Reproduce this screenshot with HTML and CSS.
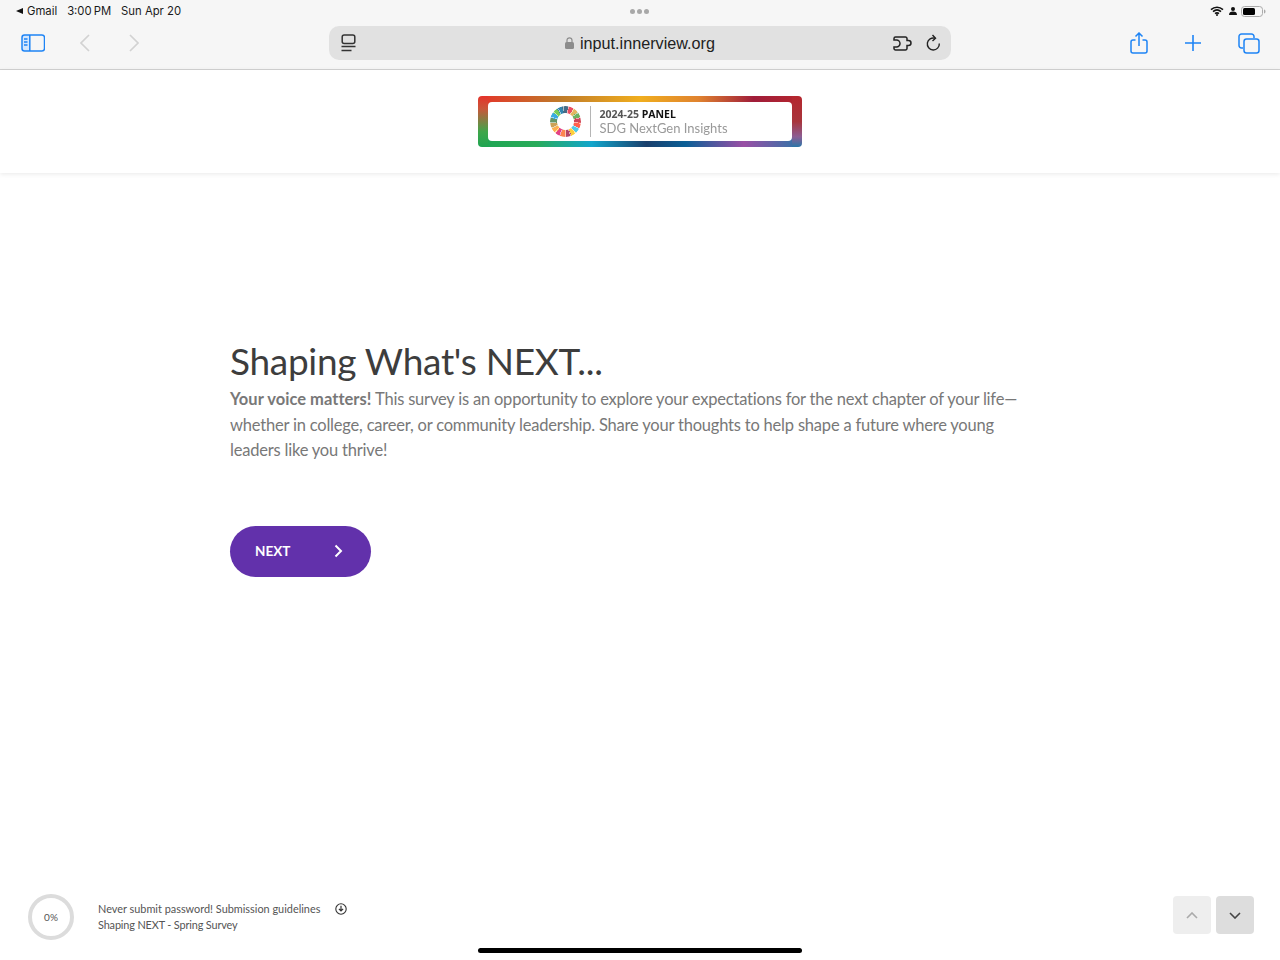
FILE: index.html
```html
<!DOCTYPE html>
<html lang="en">
<head>
<meta charset="utf-8">
<title>Shaping What's NEXT...</title>
<link rel="stylesheet" href="styles.css">
</head>
<body>
<div class="app">
  <header class="browser">
    <div class="status">
      <div class="status-left">
        <span class="back-app"><svg width="7" height="6" viewBox="0 0 7 6"><path d="M0 3 7 0v6z" fill="#111"/></svg>Gmail</span>
        <span>3:00&#8201;PM</span>
        <span>Sun Apr 20</span>
      </div>
      <div class="dots"><i></i><i></i><i></i></div>
      <div class="status-right">
        <svg width="14" height="10" viewBox="0 0 14 10"><path d="M1 3.6C4.5.4 9.500.4 13 3.600M3 5.700c2.500-2.200 5.500-2.200 8 0M5 7.600c1.300-1 2.700-1 4 0" fill="none" stroke="#111" stroke-width="1.600"/><circle cx="7" cy="9" r="1" fill="#111"/></svg>
        <svg width="8" height="8" viewBox="0 0 8 8"><circle cx="4" cy="2" r="2" fill="#111"/><path d="M0 8c0-2.500 1.500-3.500 4-3.500S8 5.500 8 8z" fill="#111"/></svg>
        <svg class="battery" width="25" height="11" viewBox="0 0 25 11"><rect x=".5" y=".5" width="21" height="10" rx="3" fill="none" stroke="#aaa"/><rect x="2" y="2" width="12" height="7" rx="1.500" fill="#000"/><path d="M23 3.500c1 .3 1.500 1 1.500 2s-.5 1.700-1.500 2z" fill="#aaa"/></svg>
      </div>
    </div>
    <div class="toolbar">
      <div class="tools-left">
        <svg class="ic-side" width="24" height="18" viewBox="0 0 24 18"><path d="M3 1h6v16H3a2 2 0 0 1-2-2V3a2 2 0 0 1 2-2z" fill="#d3e6fd"/><rect x="1" y="1" width="22.500" height="16" rx="2.500" fill="none" stroke="#1e84f5" stroke-width="1.500"/><path d="M8.800 1v16" stroke="#1e84f5" stroke-width="1.500"/><path d="M3 5h3.500M3 8h3.500M3 11h3.500" stroke="#1e84f5" stroke-width="1.300"/></svg>
        <svg class="ic-prev" width="10" height="18" viewBox="0 0 10 18"><path d="M9 1 1 9l8 8" fill="none" stroke="#d2d2d2" stroke-width="1.700"/></svg>
        <svg class="ic-next" width="10" height="18" viewBox="0 0 10 18"><path d="m1 1 8 8-8 8" fill="none" stroke="#d2d2d2" stroke-width="1.700"/></svg>
      </div>
      <div class="urlbar">
        <svg class="ic-reader" width="15" height="18" viewBox="0 0 15 18"><rect x="1.200" y="1" width="12.600" height="8.500" rx="2" fill="none" stroke="#333" stroke-width="1.500"/><path d="M.5 12.500h14M.5 16.500h10" stroke="#333" stroke-width="1.500"/></svg>
        <div class="address">
          <svg width="9" height="12" viewBox="0 0 9 12"><path d="M2 5V3.300a2.500 2.500 0 0 1 5 0V5" fill="none" stroke="#8c8c8c" stroke-width="1.200"/><rect y="5" width="9" height="7" rx="1.500" fill="#8c8c8c"/></svg>
          <span>input.innerview.org</span>
        </div>
        <svg class="ic-puzzle" width="20" height="15" viewBox="0 0 20 15"><path d="M1 4V2.500A1.500 1.500 0 0 1 2.500 1h10A1.500 1.500 0 0 1 14 2.500V4.500h1.500a2.500 2.500 0 0 1 0 5H14v3A1.500 1.500 0 0 1 12.500 14h-10A1.500 1.500 0 0 1 1 12.500V11h2.500a3.200 3.200 0 0 0 0-7z" fill="none" stroke="#222" stroke-width="1.500"/></svg>
        <svg class="ic-reload" width="15" height="18" viewBox="0 0 15 18"><path d="M9 4.200A6 6 0 1 0 13.300 9.500" fill="none" stroke="#222" stroke-width="1.400"/><path d="M6.500 1 9.500 4.200 6.500 7" fill="none" stroke="#222" stroke-width="1.400"/></svg>
      </div>
      <div class="tools-right">
        <svg width="18" height="22" viewBox="0 0 18 22"><path d="M5.500 8H3a2 2 0 0 0-2 2v9a2 2 0 0 0 2 2h12a2 2 0 0 0 2-2v-9a2 2 0 0 0-2-2h-2.500M9 14V1M5.500 4.500 9 1l3.500 3.500" fill="none" stroke="#1e84f5" stroke-width="1.500"/></svg>
        <svg width="16" height="16" viewBox="0 0 16 16"><path d="M8 0v16M0 8h16" stroke="#1e84f5" stroke-width="1.600"/></svg>
        <svg width="22" height="21" viewBox="0 0 22 21"><path d="M5 15H3.500A2.500 2.500 0 0 1 1 12.500v-9A2.500 2.500 0 0 1 3.500 1h10A2.500 2.500 0 0 1 16 3.500V5" fill="none" stroke="#1e84f5" stroke-width="1.500"/><rect x="6" y="6" width="15" height="14" rx="2.500" fill="none" stroke="#1e84f5" stroke-width="1.500"/></svg>
      </div>
    </div>
  </header>

  <div class="site-head">
    <div class="logo">
      <div class="logo-inner">
        <div class="wheel"></div>
        <div class="logo-text">
          <div class="logo-year">2024-25 <b>PANEL</b></div>
          <div class="logo-name">SDG NextGen Insights</div>
        </div>
      </div>
    </div>
  </div>

  <main class="content">
    <h1>Shaping What's NEXT...</h1>
    <p><b>Your voice matters!</b> This survey is an opportunity to explore your expectations for the next chapter of your life—<br>whether in college, career, or community leadership. Share your thoughts to help shape a future where young<br>leaders like you thrive!</p>
    <button class="next" type="button"><span>NEXT</span><svg width="9" height="14" viewBox="0 0 9 14"><path d="m1.500 1.500 5.500 5.500-5.500 5.500" fill="none" stroke="#fff" stroke-width="2"/></svg></button>
  </main>

  <footer class="foot">
    <div class="progress">0%</div>
    <div class="foot-text">
      <div class="foot-line"><span>Never submit password! Submission guidelines</span>
        <svg width="12" height="12" viewBox="0 0 12 12"><circle cx="6" cy="6" r="5.200" fill="none" stroke="#333" stroke-width="1.100"/><path d="M6 2.800v5M3.900 5.800 6 8l2.100-2.200" fill="none" stroke="#333" stroke-width="1.200"/></svg>
      </div>
      <div class="foot-title">Shaping NEXT - Spring Survey</div>
    </div>
    <div class="arrows">
      <div class="arrow up"><svg width="12" height="7" viewBox="0 0 12 7"><path d="m1 6 5-5 5 5" fill="none" stroke="#aaa" stroke-width="1.600"/></svg></div>
      <div class="arrow down"><svg width="12" height="7" viewBox="0 0 12 7"><path d="m1 1 5 5 5-5" fill="none" stroke="#444" stroke-width="1.600"/></svg></div>
    </div>
  </footer>
  <div class="home-bar"></div>
</div>
</body>
</html>
```

FILE: styles.css
```css
* { box-sizing: border-box; }
html, body { margin: 0; height: 100%; background: #fff; }
.app { position: relative; display: flex; flex-direction: column; height: 960px; overflow: hidden; font-family: "Lato", "Liberation Sans", sans-serif; }
svg { display: block; flex: none; }

/* browser chrome */
.browser { height: 70px; background: #f6f6f6; border-bottom: 1px solid #d2d2d2; font-family: "Inter", "Liberation Sans", sans-serif; }
.status { display: grid; grid-template-columns: 1fr auto 1fr; align-items: center; height: 22px; padding: 0 14px; font-size: 11.300px; color: #1a1a1a; }
.status-left { display: flex; gap: 10px; align-items: center; margin-left: 2px; }
.back-app { display: flex; gap: 4px; align-items: center; }
.status-right { display: flex; justify-content: flex-end; align-items: center; gap: 5px; }
.battery { margin-left: -1px; }
.dots { display: flex; gap: 2px; margin-left: -1px; }
.dots i { width: 5px; height: 5px; border-radius: 50%; background: #a8a8a8; }
.toolbar { display: grid; grid-template-columns: 1fr 622px 1fr; align-items: center; height: 34px; margin-top: 4px; }
.tools-left { display: flex; align-items: center; padding-left: 21px; }
.ic-prev { margin-left: 35px; }
.ic-next { margin-left: 39px; }
.tools-right { display: flex; align-items: center; padding-left: 179px; gap: 37px; }
.urlbar { display: flex; align-items: center; height: 34px; padding: 0 10px 0 12px; border-radius: 10px; background: #e1e1e1; }
.address { flex: 1; display: flex; justify-content: center; align-items: center; gap: 6px; font-family: "Liberation Sans", sans-serif; font-size: 16.200px; color: #222; margin-left: 30px; margin-right: -1px; }
.ic-puzzle { margin-right: 13px; }

/* survey header */
.site-head { display: flex; justify-content: center; align-items: flex-start; height: 103px; padding-top: 26px; background: #fff; box-shadow: 0 1px 5px rgba(0,0,0,.09); }
.logo {
  width: 324px; height: 51px; padding: 6px 10px; border-radius: 4px; filter: blur(.4px);
  background:
    linear-gradient(#e5332a, #c9573a 25%, #3fa64a 70%, #1fa552) left top / 10px 100% no-repeat,
    linear-gradient(#b5262e, #a8353c 50%, #8c5e94 80%, #2a76a8) right top / 10px 100% no-repeat,
    linear-gradient(90deg, #e5332a, #bf7a2a 25%, #f0ae1e 50%, #e0832f 68%, #a01d3a 85%, #b5262e) left top / 100% 50% no-repeat,
    linear-gradient(90deg, #1fa552, #28ab5a 18%, #12a6cc 35%, #1a3f6c 52%, #0a5f96 64%, #9a4fa5 82%, #2a76a8) left bottom / 100% 50% no-repeat;
}
.logo-inner { display: flex; align-items: center; justify-content: center; gap: 9px; height: 39px; padding-right: 2px; background: #fff; border-radius: 4px; }
.wheel {
  width: 31px; height: 31px; border-radius: 50%;
  background:
    repeating-conic-gradient(from 10deg, rgba(255,255,255,.55) 0 4deg, transparent 4deg 21.180deg),
    conic-gradient(from 10deg, #e5243b 0 21deg, #dda63a 21deg 42deg, #4c9f38 42deg 63deg, #c5192d 63deg 84deg, #ff3a21 84deg 105deg, #26bde2 105deg 126deg, #fcc30b 126deg 147deg, #a21942 147deg 168deg, #fd6925 168deg 190deg, #dd1367 190deg 211deg, #fd9d24 211deg 232deg, #bf8b2e 232deg 253deg, #3f7e44 253deg 274deg, #0a97d9 274deg 295deg, #56c02b 295deg 316deg, #00689d 316deg 337deg, #19486a 337deg 360deg);
  -webkit-mask: radial-gradient(circle, transparent 8px, #000 9px);
  mask: radial-gradient(circle, transparent 8px, #000 9px);
  opacity: .8;
}
.logo-text { height: 31px; padding: 1px 0 0 8px; border-left: 1px solid #b5b5b5; font-family: "Open Sans", "Liberation Sans", sans-serif; }
.logo-year { font-size: 10.500px; line-height: 14px; font-weight: 700; color: #555; }
.logo-year b { color: #111; font-weight: 700; }
.logo-name { font-family: "Lato", sans-serif; font-size: 13px; line-height: 15px; color: #999; }

/* survey body */
.content { flex: 1; padding: 164px 0 0 230px; }
h1 { margin: 0 0 2px; font-size: 37px; line-height: 48px; font-weight: 400; letter-spacing: -.3px; color: #3d3d3d; }
p { margin: 0; font-size: 16.500px; line-height: 25.500px; letter-spacing: -.2px; color: #787878; }
p b { font-weight: 700; letter-spacing: .03px; }
.next { display: flex; align-items: center; justify-content: space-between; width: 141px; height: 51px; margin-top: 62px; padding: 0 28px 0 25px; border: 0; border-radius: 26px; background: #6231ab; color: #fff; font: 700 13.500px "Lato", sans-serif; }

/* footer */
.foot { display: flex; align-items: center; height: 90px; padding: 4px 26px 0 28px; }
.progress { display: flex; align-items: center; justify-content: center; width: 46px; height: 46px; border: 4px solid #dcdcdc; border-radius: 50%; font-size: 10px; color: #555; }
.foot-text { margin-left: 24px; font-size: 10.900px; line-height: 16px; color: #555; }
.foot-line { display: flex; align-items: center; gap: 15px; }
.foot-title { letter-spacing: -.14px; }
.arrows { display: flex; gap: 5px; margin-left: auto; margin-top: -4px; }
.arrow { display: flex; align-items: center; justify-content: center; width: 38px; height: 38px; border-radius: 4px; }
.up { background: #eeeeee; }
.down { background: #dddddd; }
.home-bar { position: absolute; left: 478px; top: 948px; width: 324px; height: 5px; border-radius: 3px; background: #000; }
```
